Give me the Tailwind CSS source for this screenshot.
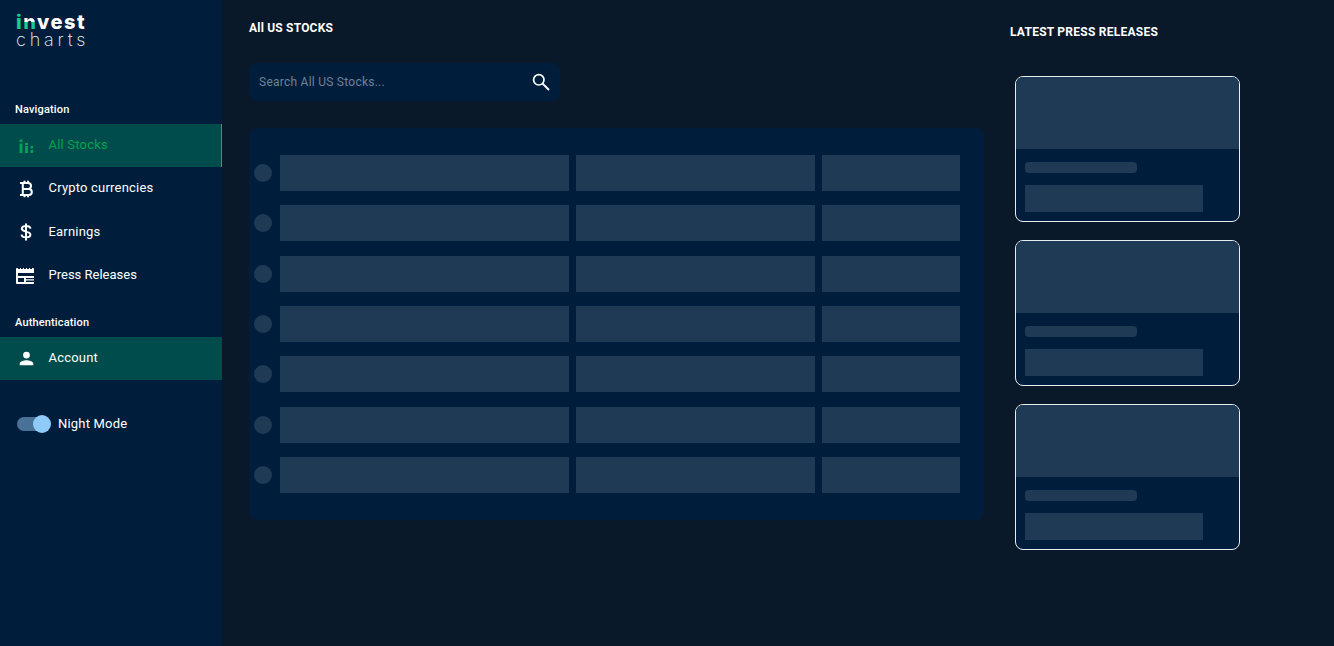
<!DOCTYPE html>
<html lang="en">
<head>
<meta charset="utf-8">
<title>Invest Charts</title>
<script src="https://cdn.jsdelivr.net/npm/@tailwindcss/browser@4"></script>
</head>
<body class="bg-[#0a1929] text-white font-['Roboto',sans-serif] overflow-hidden">
<div class="flex h-[646px] w-[1334px]">

  <!-- sidebar -->
  <aside class="w-[222px] shrink-0 bg-[#001e3c]">
    <div class="h-[102px] pl-[16px] pt-[14px] font-['Inter',sans-serif]">
      <div class="text-[20px] leading-[17px] font-extrabold tracking-[1.5px]"><span class="text-[#17c995]">i</span><span class="bg-[linear-gradient(#fff_52%,#17c995_52%)] bg-clip-text text-transparent">n</span>vest</div>
      <div class="text-[18px] leading-[17px] font-extralight tracking-[3.8px] text-gray-100">charts</div>
    </div>

    <div class="h-[22px] pl-[15px] text-[11px] leading-[15px] font-medium tracking-[0.15px]">Navigation</div>
    <nav class="text-[13px] leading-[15px] tracking-[0.2px]">
      <a class="flex items-center h-[43px] pl-[18px] bg-[#004b4b] text-[#00a152] border-r border-[#2f9c80]">
        <svg class="w-[16px] h-[16px] mr-[14.5px]" viewBox="0 0 16 16" fill="#00a152">
          <rect x="1.500" y="1.500" width="3" height="2.600"/><rect x="1.500" y="5.500" width="3" height="9.500"/>
          <rect x="7" y="5" width="3" height="2"/><rect x="7" y="8" width="3" height="7"/>
          <rect x="12.500" y="8" width="2.600" height="2.400"/><rect x="12.500" y="12" width="2.600" height="3"/>
        </svg>
        <span class="pb-[2px]">All Stocks</span>
      </a>
      <a class="flex items-center h-[43px] pl-[18px]">
        <svg class="w-[16px] h-[18px] mr-[14.5px]" viewBox="0 0 16 18" fill="none" stroke="#fff" stroke-width="2">
          <path d="M2 3h8a3 3 0 0 1 0 6H4.800M4.800 9h6a3 3 0 0 1 0 6H2M4.800 3v12M6.500 .8V3M10 .8V3M6.500 15v2.200M10 15v2.200"/>
        </svg>
        <span class="pb-[2px]">Crypto currencies</span>
      </a>
      <a class="flex items-center h-[44px] pl-[18px]">
        <svg class="w-[16px] h-[18px] mr-[14.5px]" viewBox="0 0 16 18" fill="none" stroke="#fff" stroke-width="2">
          <path d="M12.500 5.600C12.200 3.900 10.500 3 8 3 5.400 3 3.800 4 3.800 5.600c0 1.700 1.600 2.400 4.200 3 2.700.6 4.400 1.300 4.400 3.100 0 1.600-1.800 2.600-4.400 2.600-2.500 0-4.200-.9-4.500-2.700M8 .5v17"/>
        </svg>
        <span class="pb-[2px]">Earnings</span>
      </a>
      <a class="flex items-center h-[43px] pl-[16px]">
        <svg class="w-[20px] h-[18px] mr-[12.5px]" viewBox="0 0 20 18" fill="#fff">
          <path fill-rule="evenodd" d="M1 1h1v1h2V1h1v1h2V1h1v1h2V1h1v1h2V1h1v1h2V1h1a1 1 0 0 1 1 1v14a1 1 0 0 1-1 1H1a1 1 0 0 1-1-1V2a1 1 0 0 1 1-1zM2 6v3h16V6zM2 11v4h6v-4zm8 0v1.300h8V11zm0 2.600V15h8v-1.400z"/>
        </svg>
        <span class="pb-[2px] tracking-normal">Press Releases</span>
      </a>
    </nav>

    <div class="h-[22px] mt-[18px] pl-[15px] text-[11px] leading-[15px] font-medium tracking-[0.15px]">Authentication</div>
    <a class="flex items-center h-[43px] pl-[18px] bg-[#004b4b] text-[13px] tracking-[0.2px]">
      <svg class="w-[17px] h-[17px] mr-[13.5px]" viewBox="0 0 24 24" fill="#fff">
        <path d="M12 12a4.800 4.800 0 1 0 0-9.600 4.800 4.800 0 0 0 0 9.600zm0 2.400c-3.200 0-9.600 1.600-9.600 4.800v2.400h19.200v-2.400c0-3.200-6.400-4.800-9.600-4.800z"/>
      </svg>
      <span class="pb-[2px]">Account</span>
    </a>

    <div class="flex items-center mt-[34px] pl-[17px] text-[13px] tracking-[0.2px]">
      <span class="relative w-[33px] h-[14px] rounded-full bg-[#4a7299] mr-[8px]">
        <span class="absolute right-[-1px] top-[-2px] w-[18px] h-[18px] rounded-full bg-[#90caf9]"></span>
      </span>
      Night Mode
    </div>
  </aside>

  <!-- stocks column -->
  <main class="w-[761px] shrink-0 pl-[27px] pt-[21px]">
    <h1 class="text-[12px] leading-[14px] font-bold tracking-[0.2px]">All US STOCKS</h1>
    <div class="flex items-center justify-between w-[311px] h-[38px] mt-[28px] pl-[10px] pr-[9px] rounded-lg bg-[#001e3c]">
      <span class="text-[12px] tracking-[0.25px] text-[#6f8296]">Search All US Stocks...</span>
      <svg class="w-[20px] h-[20px]" viewBox="0 0 20 20" fill="none" stroke="#fff" stroke-width="1.700">
        <circle cx="7.800" cy="7.800" r="5.200"/><path d="M11.600 11.600 18 18" stroke-width="2"/>
      </svg>
    </div>
    <div class="w-[735px] h-[392px] mt-[27px] pl-[5px] pt-[27px] rounded-lg bg-[#001e3c] flex flex-col gap-[14.33px]">
      <div class="flex items-center h-[36px]"><span class="w-[18px] h-[18px] rounded-full bg-[#1e3a55] mr-[8px]"></span><span class="w-[289px] h-full bg-[#1e3a55] mr-[7px]"></span><span class="w-[239px] h-full bg-[#1e3a55] mr-[7px]"></span><span class="w-[138px] h-full bg-[#1e3a55]"></span></div>
      <div class="flex items-center h-[36px]"><span class="w-[18px] h-[18px] rounded-full bg-[#1e3a55] mr-[8px]"></span><span class="w-[289px] h-full bg-[#1e3a55] mr-[7px]"></span><span class="w-[239px] h-full bg-[#1e3a55] mr-[7px]"></span><span class="w-[138px] h-full bg-[#1e3a55]"></span></div>
      <div class="flex items-center h-[36px]"><span class="w-[18px] h-[18px] rounded-full bg-[#1e3a55] mr-[8px]"></span><span class="w-[289px] h-full bg-[#1e3a55] mr-[7px]"></span><span class="w-[239px] h-full bg-[#1e3a55] mr-[7px]"></span><span class="w-[138px] h-full bg-[#1e3a55]"></span></div>
      <div class="flex items-center h-[36px]"><span class="w-[18px] h-[18px] rounded-full bg-[#1e3a55] mr-[8px]"></span><span class="w-[289px] h-full bg-[#1e3a55] mr-[7px]"></span><span class="w-[239px] h-full bg-[#1e3a55] mr-[7px]"></span><span class="w-[138px] h-full bg-[#1e3a55]"></span></div>
      <div class="flex items-center h-[36px]"><span class="w-[18px] h-[18px] rounded-full bg-[#1e3a55] mr-[8px]"></span><span class="w-[289px] h-full bg-[#1e3a55] mr-[7px]"></span><span class="w-[239px] h-full bg-[#1e3a55] mr-[7px]"></span><span class="w-[138px] h-full bg-[#1e3a55]"></span></div>
      <div class="flex items-center h-[36px]"><span class="w-[18px] h-[18px] rounded-full bg-[#1e3a55] mr-[8px]"></span><span class="w-[289px] h-full bg-[#1e3a55] mr-[7px]"></span><span class="w-[239px] h-full bg-[#1e3a55] mr-[7px]"></span><span class="w-[138px] h-full bg-[#1e3a55]"></span></div>
      <div class="flex items-center h-[36px]"><span class="w-[18px] h-[18px] rounded-full bg-[#1e3a55] mr-[8px]"></span><span class="w-[289px] h-full bg-[#1e3a55] mr-[7px]"></span><span class="w-[239px] h-full bg-[#1e3a55] mr-[7px]"></span><span class="w-[138px] h-full bg-[#1e3a55]"></span></div>
    </div>
  </main>

  <!-- press releases -->
  <section class="pl-[27px] pt-[25px]">
    <h2 class="text-[12px] leading-[14px] font-bold tracking-[0.25px]">LATEST PRESS RELEASES</h2>
    <div class="mt-[37px] ml-[5px] flex flex-col gap-[18px]">
      <div class="w-[225px] h-[146px] rounded-lg border border-[#e8edf2] bg-[#001e3c] overflow-hidden">
        <div class="h-[72px] bg-[#1e3a55]"></div>
        <div class="w-[112px] h-[11px] mt-[13px] ml-[9px] rounded-sm bg-[#1e3a55]"></div>
        <div class="w-[178px] h-[27px] mt-[12px] ml-[9px] bg-[#1e3a55]"></div>
      </div>
      <div class="w-[225px] h-[146px] rounded-lg border border-[#e8edf2] bg-[#001e3c] overflow-hidden">
        <div class="h-[72px] bg-[#1e3a55]"></div>
        <div class="w-[112px] h-[11px] mt-[13px] ml-[9px] rounded-sm bg-[#1e3a55]"></div>
        <div class="w-[178px] h-[27px] mt-[12px] ml-[9px] bg-[#1e3a55]"></div>
      </div>
      <div class="w-[225px] h-[146px] rounded-lg border border-[#e8edf2] bg-[#001e3c] overflow-hidden">
        <div class="h-[72px] bg-[#1e3a55]"></div>
        <div class="w-[112px] h-[11px] mt-[13px] ml-[9px] rounded-sm bg-[#1e3a55]"></div>
        <div class="w-[178px] h-[27px] mt-[12px] ml-[9px] bg-[#1e3a55]"></div>
      </div>
    </div>
  </section>
</div>
</body>
</html>
